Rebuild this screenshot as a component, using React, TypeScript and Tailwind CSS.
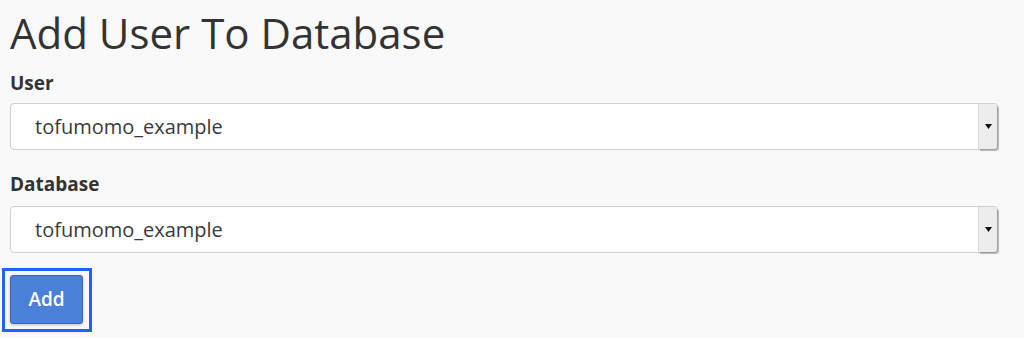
export default function App() {
  const fields = [
    { label: "User", value: "tofumomo_example", labelTop: "mt-[12px]", boxTop: "mt-[9px]" },
    { label: "Database", value: "tofumomo_example", labelTop: "mt-[23px]", boxTop: "mt-[11px]" },
  ];

  return (
    <div
      className="w-[1024px] h-[338px] overflow-hidden bg-[#f9f9f9] text-[#333]"
      style={{ fontFamily: '"Open Sans", "Noto Sans", sans-serif' }}
    >
      <div className="pl-[10px] pr-[26px] pt-[6px]">
        <h1 className="text-[42px] leading-[54px] font-normal">Add User To Database</h1>

        {fields.map((f, i) => (
          <div key={i}>
            <label className={`block text-[19px] leading-[22px] font-bold text-[#333] ${f.labelTop}`}>{f.label}</label>
            <div className={`flex h-[47px] rounded-[4px] border border-[#cfcfcf] bg-white ${f.boxTop}`}>
              <div className="flex flex-1 items-center pl-[24px] text-[20px] text-[#3a3a3a]">{f.value}</div>
              <div className="flex w-[19px] items-center justify-center rounded-r-[3px] border-l border-[#d8d8d8] bg-[#ededed] shadow-[2px_2px_1px_rgba(0,0,0,0.25)]">
                <svg width="7" height="5" viewBox="0 0 7 5">
                  <path d="M0 0 L7 0 L3.5 5 Z" fill="#111" />
                </svg>
              </div>
            </div>
          </div>
        ))}

        <div className="mt-[15px] -ml-[8px] inline-block border-[3px] border-[#1f62ff] pt-[4px] pb-[5px] pl-[5px] pr-[6px]">
          <button className="flex h-[49px] w-[73px] items-center justify-center rounded-[3px] border border-[#3b68b0] bg-[#4a80d8] text-[19px] font-semibold text-white shadow-[0_1px_3px_rgba(0,0,0,0.25)]">
            Add
          </button>
        </div>
      </div>
    </div>
  );
}
